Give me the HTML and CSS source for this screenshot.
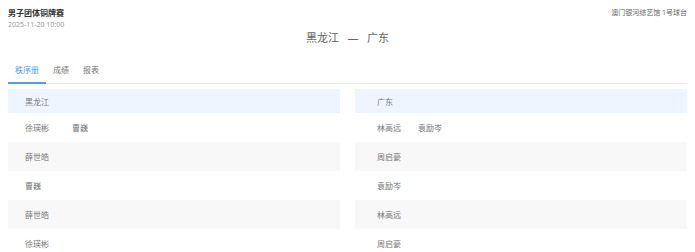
FILE: index.html
```html
<!DOCTYPE html>
<html lang="zh">
<head>
    <meta charset="UTF-8">
    <meta name="viewport" content="width=device-width, initial-scale=1.0">
    <title>男子团体铜牌赛</title>
    <link rel="stylesheet" href="styles.css">
</head>
<body>
    <div class="top">
        <div>
            <div class="event">男子团体铜牌赛</div>
            <div class="date">2025-11-20 10:00</div>
        </div>
        <div class="venue">澳门银河综艺馆 1号球台</div>
    </div>
    <div class="match">黑龙江 &nbsp; — &nbsp; 广东</div>

    <div class="tabs">
        <div class="tab active">秩序册</div>
        <div class="tab">成绩</div>
        <div class="tab">报表</div>
    </div>

    <div class="teams">
        <div class="team left">
            <div class="row head"><span>黑龙江</span></div>
            <div class="row"><span>徐瑛彬</span><span>曹巍</span></div>
            <div class="row alt"><span>薛世皓</span></div>
            <div class="row"><span>曹巍</span></div>
            <div class="row alt"><span>薛世皓</span></div>
            <div class="row"><span>徐瑛彬</span></div>
        </div>
        <div class="team right">
            <div class="row head"><span>广东</span></div>
            <div class="row"><span>林高远</span><span>袁励岑</span></div>
            <div class="row alt"><span>周启豪</span></div>
            <div class="row"><span>袁励岑</span></div>
            <div class="row alt"><span>林高远</span></div>
            <div class="row"><span>周启豪</span></div>
        </div>
    </div>
</body>
</html>
```

FILE: styles.css
```css
body {
    margin: 0;
    padding: 8px;
    font-family: "Noto Sans", "Noto Sans CJK SC", sans-serif;
    color: #666;
    background-color: #fff;
}

.top {
    display: flex;
    justify-content: space-between;
    align-items: flex-start;
}

.event {
    font-size: 8px;
    line-height: 10px;
    font-weight: bold;
    color: #333;
}

.date {
    margin-top: 2px;
    font-size: 7px;
    line-height: 10px;
    color: #999;
}

.venue {
    font-size: 7px;
    line-height: 10px;
    color: #666;
}

.match {
    margin-top: 1px;
    text-align: center;
    font-size: 11px;
    line-height: 14px;
    color: #666;
}

.tabs {
    display: flex;
    margin-top: 13px;
    border-bottom: 1px solid #e8ebf0;
}

.tab {
    padding: 0 7px;
    font-size: 8px;
    line-height: 24px;
    color: #777;
    border-bottom: 2px solid transparent;
    margin-bottom: -1px;
}

.tab.active {
    color: #4a9ff0;
    border-bottom-color: #4a9ff0;
}

.teams {
    display: grid;
    grid-template-columns: 1fr 1fr;
    gap: 15px;
    margin-top: 5px;
}

.row {
    display: flex;
    align-items: center;
    height: 29px;
    font-size: 8px;
    color: #777;
}

.row.head {
    height: 24px;
    background-color: #eef5fe;
}

.row.alt {
    background-color: #f8f8f8;
}

.left .row {
    padding-left: 17px;
}

.left .row span:first-child {
    width: 47px;
}

.right .row {
    padding-left: 22px;
}

.right .row span:first-child {
    width: 41px;
}
```
